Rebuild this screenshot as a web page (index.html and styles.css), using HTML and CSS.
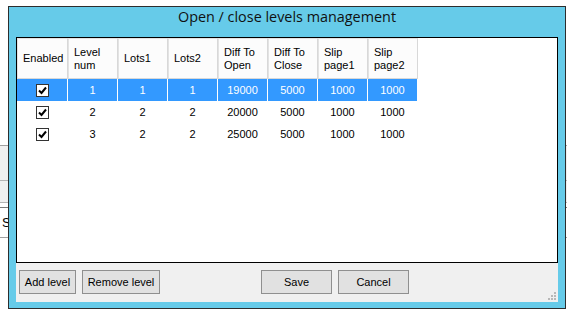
FILE: index.html
```html
<!DOCTYPE html>
<html>
<head>
  <title>Open / close levels management</title>
  <link rel="stylesheet" href="styles.css">
</head>
<body>
  <div class="desk">
    <div class="behind">
      <div class="behind-row gray tall"></div>
      <div class="behind-row gray"></div>
      <div class="behind-row gap"></div>
      <div class="behind-row field"><span class="behind-text">S</span></div>
    </div>

    <div class="window">
      <div class="titlebar">Open / close levels management</div>
      <div class="client">
        <div class="grid">
          <table class="levels">
            <thead>
              <tr>
                <th class="first">Enabled</th>
                <th>Level<br>num</th>
                <th>Lots1</th>
                <th>Lots2</th>
                <th>Diff To<br>Open</th>
                <th>Diff To<br>Close</th>
                <th>Slip<br>page1</th>
                <th>Slip<br>page2</th>
              </tr>
            </thead>
            <tbody>
              <tr class="selected">
                <td class="first"><span class="checkbox"><svg width="11" height="11" viewBox="0 0 11 11"><path d="M2 5.5 L4.5 8 L9 2.5" fill="none" stroke="#000" stroke-width="2"/></svg></span></td>
                <td>1</td><td>1</td><td>1</td><td>19000</td><td>5000</td><td>1000</td><td>1000</td>
              </tr>
              <tr>
                <td class="first"><span class="checkbox"><svg width="11" height="11" viewBox="0 0 11 11"><path d="M2 5.5 L4.5 8 L9 2.5" fill="none" stroke="#000" stroke-width="2"/></svg></span></td>
                <td>2</td><td>2</td><td>2</td><td>20000</td><td>5000</td><td>1000</td><td>1000</td>
              </tr>
              <tr>
                <td class="first"><span class="checkbox"><svg width="11" height="11" viewBox="0 0 11 11"><path d="M2 5.5 L4.5 8 L9 2.5" fill="none" stroke="#000" stroke-width="2"/></svg></span></td>
                <td>3</td><td>2</td><td>2</td><td>25000</td><td>5000</td><td>1000</td><td>1000</td>
              </tr>
            </tbody>
          </table>
        </div>
        <div class="actions">
          <button type="button" class="btn btn-add">Add level</button>
          <button type="button" class="btn btn-remove">Remove level</button>
          <button type="button" class="btn btn-save">Save</button>
          <button type="button" class="btn btn-cancel">Cancel</button>
        </div>
        <svg class="grip" width="10" height="10" viewBox="0 0 10 10">
          <rect x="7" y="1" width="2" height="2" fill="#b8b8b8"/>
          <rect x="4" y="4" width="2" height="2" fill="#b8b8b8"/>
          <rect x="7" y="4" width="2" height="2" fill="#b8b8b8"/>
          <rect x="1" y="7" width="2" height="2" fill="#b8b8b8"/>
          <rect x="4" y="7" width="2" height="2" fill="#b8b8b8"/>
          <rect x="7" y="7" width="2" height="2" fill="#b8b8b8"/>
        </svg>
      </div>
    </div>
  </div>
</body>
</html>
```

FILE: styles.css
```css
body {
  margin: 0;
  background: #ffffff;
  font: 11px "Liberation Sans", Arial, sans-serif;
  color: #000;
}

.desk {
  position: relative;
  width: 567px;
  height: 311px;
  overflow: hidden;
}

/* window sitting behind the dialog */
.behind {
  position: absolute;
  left: 0;
  top: 145px;
  width: 567px;
  border-top: 1px solid #a0a0a0;
}

.behind-row {
  box-sizing: border-box;
}

.behind-row.gray {
  height: 22px;
  background: #f0f0f0;
  border-bottom: 1px solid #b4b4b4;
}

.behind-row.tall {
  height: 35px;
}

.behind-row.gap {
  height: 5px;
  border-bottom: 1px solid #7a7a7a;
}

.behind-row.field {
  height: 30px;
  border-bottom: 1px solid #a0a0a0;
  padding: 7px 0 0 2px;
  font-size: 13px;
}

.window {
  position: absolute;
  left: 8px;
  top: 6px;
  width: 542px;
  height: 295px;
  border: 1px solid #2d2d2d;
  background: #66cbe9;
  padding: 0 7px 6px 7px;
  display: flex;
  flex-direction: column;
}

.titlebar {
  height: 30px;
  line-height: 28px;
  text-align: center;
  font: 14.4px "Open Sans", "Noto Sans", sans-serif;
  color: #111;
  margin: 0 -7px;
}

.client {
  position: relative;
  flex: 1;
  background: #f0f0f0;
  display: flex;
  flex-direction: column;
}

.grid {
  height: 226px;
  box-sizing: border-box;
  border: 1px solid #000;
  background: #fff;
}

.levels {
  border-collapse: separate;
  border-spacing: 0;
  table-layout: fixed;
  width: 401px;
}

.levels th {
  box-sizing: border-box;
  width: 50px;
  height: 41px;
  padding: 0 0 0 5px;
  background: #fcfcfc;
  border-top: 1px solid #e3e3e3;
  border-left: 1px solid #e3e3e3;
  border-right: 1px solid #d8d8d8;
  border-bottom: 1px solid #d8d8d8;
  font-weight: normal;
  text-align: left;
  line-height: 13px;
  vertical-align: middle;
}

.levels .first {
  width: 51px;
}

.levels td {
  box-sizing: border-box;
  height: 22px;
  padding: 0;
  text-align: center;
  border-right: 1px solid #fff;
  vertical-align: middle;
}

.levels tr.selected td {
  background: #3399ff;
  color: #fff;
}

.checkbox {
  display: inline-block;
  width: 13px;
  height: 13px;
  box-sizing: border-box;
  border: 1px solid #333;
  background: #fff;
  vertical-align: middle;
}

.checkbox svg {
  display: block;
}

.actions {
  display: flex;
  padding: 7px 0 0 3px;
  gap: 6px;
}

.btn {
  height: 24px;
  box-sizing: border-box;
  background: #e1e1e1;
  border: 1px solid #8f8f8f;
  border-radius: 0;
  padding: 0;
  font: 11px "Liberation Sans", Arial, sans-serif;
  color: #000;
}

.btn-add {
  width: 57px;
}

.btn-remove {
  width: 78px;
}

.btn-save {
  width: 71px;
  margin-left: 95px;
}

.btn-cancel {
  width: 71px;
}

.grip {
  position: absolute;
  right: 1px;
  bottom: 1px;
}
```
